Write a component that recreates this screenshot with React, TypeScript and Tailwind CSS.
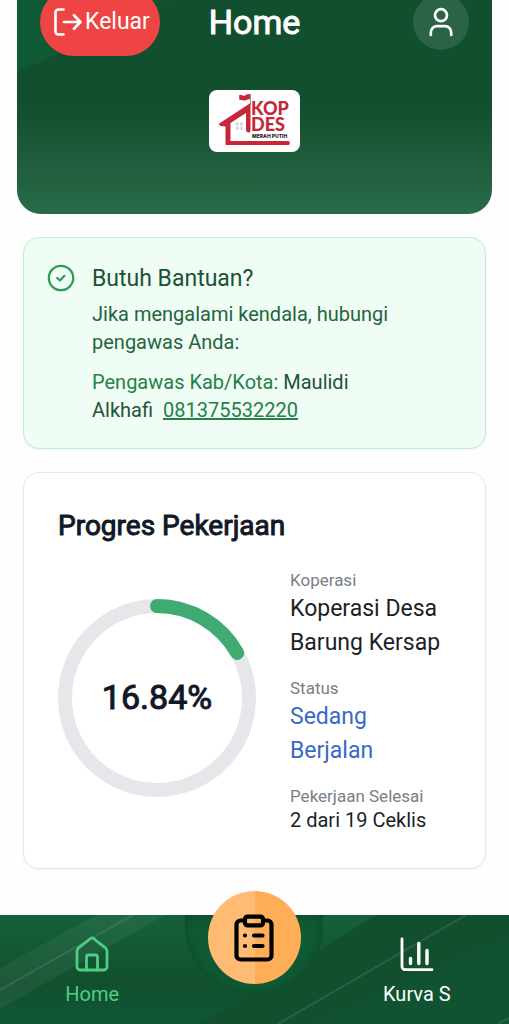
const PROGRESS = 16.84;

function LogoutIcon() {
  return (
    <svg
      viewBox="0 0 28 28"
      className="w-7 h-7 shrink-0"
      fill="none"
      stroke="currentColor"
      strokeWidth="2.7"
      strokeLinecap="round"
      strokeLinejoin="round"
      aria-hidden="true"
    >
      <path d="M9.5 1.5h-5a3 3 0 0 0-3 3v19a3 3 0 0 0 3 3h5" />
      <path d="M10 14h16.2M20 7.2l6.4 6.8-6.4 6.8" />
    </svg>
  );
}

function UserIcon() {
  return (
    <svg
      viewBox="0 0 24 30"
      className="w-6 h-[30px]"
      fill="none"
      stroke="currentColor"
      strokeWidth="2.7"
      strokeLinecap="round"
      aria-hidden="true"
    >
      <circle cx="12" cy="8.2" r="6" />
      <path d="M1.8 28v-2.6A6.2 6.2 0 0 1 8 19.2h8a6.2 6.2 0 0 1 6.2 6.2V28" />
    </svg>
  );
}

function CheckIcon() {
  return (
    <svg
      viewBox="0 0 28 28"
      className="w-7 h-7 mt-0.5 shrink-0 text-[#2a9d57]"
      fill="none"
      stroke="currentColor"
      strokeWidth="2.2"
      strokeLinecap="round"
      strokeLinejoin="round"
      aria-hidden="true"
    >
      <circle cx="14" cy="14" r="12.2" />
      <path d="m10.2 14 2.7 2.5 4.6-4.7" />
    </svg>
  );
}

function HomeIcon() {
  return (
    <svg
      viewBox="0 0 34 36"
      className="w-[34px] h-9"
      fill="none"
      stroke="currentColor"
      strokeWidth="2.8"
      strokeLinecap="round"
      strokeLinejoin="round"
      aria-hidden="true"
    >
      <path d="M2 15c0-1.300.6-2.300 1.600-3.100L15.500 2.500a2.400 2.400 0 0 1 3 0l11.900 9.400c1 .8 1.600 1.800 1.600 3.100v15.800a3.200 3.200 0 0 1-3.200 3.200H5.200A3.200 3.200 0 0 1 2 30.800Z" />
      <path d="M11.500 34V21a2 2 0 0 1 2-2h7a2 2 0 0 1 2 2v13" />
    </svg>
  );
}

function ChartIcon() {
  return (
    <svg
      viewBox="0 0 34 36"
      className="w-[34px] h-9"
      fill="none"
      stroke="currentColor"
      strokeWidth="2.8"
      strokeLinecap="round"
      strokeLinejoin="round"
      aria-hidden="true"
    >
      <path d="M2 3v27.500a3.200 3.200 0 0 0 3.200 3.200H32" />
      <path strokeWidth="3.4" d="M10.5 22.500v5M18.800 7.500v20M27 14.500v13" />
    </svg>
  );
}

function ClipboardIcon() {
  return (
    <svg
      viewBox="0 0 40 48"
      className="w-10 h-12"
      fill="none"
      stroke="currentColor"
      strokeWidth="4.2"
      strokeLinecap="round"
      strokeLinejoin="round"
      aria-hidden="true"
    >
      <path d="M10 6.500H6.500a4 4 0 0 0-4 4V41.500a4 4 0 0 0 4 4h27a4 4 0 0 0 4-4v-31a4 4 0 0 0-4-4H30" />
      <rect x="11" y="2.6" width="18" height="8.8" rx="2.5" />
      <path d="M20 21.500h8.500M20 32h8.500M11 21.500h.01M11 32h.01" />
    </svg>
  );
}

function Logo() {
  return (
    <div className="w-[91px] h-[62px] rounded-lg bg-white">
      <svg viewBox="0 0 91 62" className="w-full h-full" role="img" aria-label="Kopdes Merah Putih">
        <g fill="#c4283a">
          <path d="M9.500 34 41.500 13v27q0 2.500-1.500 2.500-3 0-3-3V23L21.500 33v18h58q1.300 0 1.300 2t-1.300 2H16.500V36.500l-5-.5z" />
          <path d="M30 5.500c2-2 4 1.500 6 0 2-1.800 3.500-1 5-1.500v5c-2 .6-3 .5-5 1.500-2 .5-3-1-5.500-.3z" />
          <text x="42" y="25" fontFamily="Lato" fontWeight="900" fontSize="18">KOP</text>
          <text x="42" y="41" fontFamily="Lato" fontWeight="900" fontSize="18">DES</text>
        </g>
        <path d="M41.500 4v11" stroke="#8d6b70" strokeWidth="0.8" />
        <path d="M27 32.500h2.800v3H27zm4 0h2.800v3H31zm-4 4.200h2.800v3H27zm4 0h2.800v3H31z" fill="#d6d6d6" />
        <text x="43" y="48" fontFamily="Inter" fontWeight="800" fontSize="5" fill="#222">MERAH PUTIH</text>
      </svg>
    </div>
  );
}

function Header() {
  return (
    <header className="relative overflow-hidden mx-[17px] rounded-b-3xl bg-linear-to-b from-[#124f2f] from-50% to-[#296b4a] px-[23px] pb-[62px]">
      <svg
        viewBox="0 0 160 72"
        className="absolute top-0 left-0 w-40 h-[72px]"
        aria-hidden="true"
      >
        <defs>
          <linearGradient id="corner">
            <stop offset="0" stopColor="#0d5c36" />
            <stop offset="1" stopColor="#11522f" />
          </linearGradient>
        </defs>
        <path d="M0 0h160L0 72z" fill="url(#corner)" />
      </svg>
      <div className="relative -mt-3 grid grid-cols-[1fr_auto_1fr] items-center">
        <button className="justify-self-start flex items-center gap-[3px] h-[68px] pl-3.5 pr-2.5 rounded-full bg-[#ef4444] text-white text-[23px]">
          <LogoutIcon />
          Keluar
        </button>
        <h1 className="text-[34px] leading-10 text-white [-webkit-text-stroke:1px]">Home</h1>
        <button
          aria-label="Profil"
          className="justify-self-end flex items-center justify-center w-14 h-14 rounded-full bg-[#2b6346] text-white"
        >
          <UserIcon />
        </button>
      </div>
      <div className="relative flex justify-center mt-[34px]">
        <Logo />
      </div>
    </header>
  );
}

function HelpCard() {
  return (
    <section className="flex gap-[17px] px-[23px] py-6 rounded-2xl border border-[#bdeecf] bg-[#effdf4] shadow-xs">
      <CheckIcon />
      <div className="text-xl leading-7">
        <h2 className="text-[23px] leading-[34px] text-[#1b5237]">Butuh Bantuan?</h2>
        <p className="mt-1 text-[#256540]">
          Jika mengalami kendala, hubungi pengawas Anda:
        </p>
        <p className="mt-3 max-w-72 text-[#24523b]">
          <span className="text-[#258049]">Pengawas Kab/Kota:</span> Maulidi Alkhafi
          <a href="tel:081375532220" className="ml-2.5 text-[#258049] underline">
            081375532220
          </a>
        </p>
      </div>
    </section>
  );
}

function ProgressRing() {
  return (
    <div className="grid place-items-center w-[198px] shrink-0 pb-1">
      <svg
        viewBox="0 0 198 198"
        className="[grid-area:1/1] w-full -rotate-90"
        fill="none"
        strokeWidth="14"
        aria-hidden="true"
      >
        <circle cx="99" cy="99" r="92" stroke="#e5e7eb" />
        <circle
          cx="99"
          cy="99"
          r="92"
          stroke="#3fab73"
          strokeLinecap="round"
          pathLength="100"
          strokeDasharray={`${PROGRESS} 100`}
        />
      </svg>
      <span className="[grid-area:1/1] pb-0.5 text-[34px] leading-10 text-[#111827] [-webkit-text-stroke:1px]">
        {PROGRESS}%
      </span>
    </div>
  );
}

function ProgressCard() {
  return (
    <section className="px-[34px] pt-[35px] pb-9 rounded-2xl border border-gray-200 bg-white shadow-xs">
      <h2 className="text-[28px] leading-9 text-[#111827] [-webkit-text-stroke:1px]">
        Progres Pekerjaan
      </h2>
      <div className="flex items-center gap-[34px] mt-6">
        <ProgressRing />
        <dl className="flex flex-col gap-4 text-[23px] leading-[34px] text-[#1b1f27]">
          <div>
            <dt className="text-[17px] leading-6 text-[#797e87]">Koperasi</dt>
            <dd>Koperasi Desa Barung Kersap</dd>
          </div>
          <div>
            <dt className="text-[17px] leading-6 text-[#797e87]">Status</dt>
            <dd className="w-24 text-[#3a69cb]">Sedang Berjalan</dd>
          </div>
          <div>
            <dt className="text-[17px] leading-6 text-[#797e87]">Pekerjaan Selesai</dt>
            <dd className="text-xl leading-6">2 dari 19 Ceklis</dd>
          </div>
        </dl>
      </div>
    </section>
  );
}

function BottomNav() {
  return (
    <nav className="sticky bottom-0 mt-auto h-[109px] bg-linear-to-b from-[#14623a] via-[#12502f] via-60% to-[#0d5635]">
      <svg
        viewBox="0 0 509 109"
        preserveAspectRatio="none"
        className="absolute inset-0 w-full h-full"
        aria-hidden="true"
      >
        <path d="M376 0h133v109H200z" fill="#124f2f" />
        <path d="M509 20v89H310z" fill="#0e5634" opacity="0.5" />
        <path d="M0 53 96 0h69L0 94z" fill="#fff" opacity="0.05" />
        <path
          d="M0 75 133 0M278 109 466 0M498 109l11-6"
          stroke="#fff"
          strokeOpacity="0.1"
          strokeWidth="2"
        />
      </svg>
      <div className="relative grid grid-cols-3 h-full px-[11px]">
        <a
          href="#home"
          className="flex flex-col items-center gap-2 pt-[21px] text-xl leading-7 text-[#4fce82]"
        >
          <HomeIcon />
          Home
        </a>
        <div className="flex justify-center">
          <div className="flex justify-center w-[138px] h-20 shrink-0 rounded-b-[69px] bg-[#0f5a34] shadow-[inset_0_0_12px_#0e4728]">
            <button
              aria-label="Ceklis"
              className="flex items-center justify-center w-[93px] h-[93px] -mt-6 rounded-full bg-linear-to-r from-[#ffba73] from-50% to-[#ffad57] to-50% text-black"
            >
              <ClipboardIcon />
            </button>
          </div>
        </div>
        <a
          href="#kurva-s"
          className="flex flex-col items-center gap-2 pt-[21px] text-xl leading-7 text-white"
        >
          <ChartIcon />
          Kurva S
        </a>
      </div>
    </nav>
  );
}

export default function App() {
  return (
    <div className="flex flex-col min-h-screen bg-[#fefefe] font-[Roboto,sans-serif]">
      <Header />
      <main className="flex flex-col gap-[23px] px-[23px] pt-[23px] pb-11">
        <HelpCard />
        <ProgressCard />
      </main>
      <BottomNav />
    </div>
  );
}
